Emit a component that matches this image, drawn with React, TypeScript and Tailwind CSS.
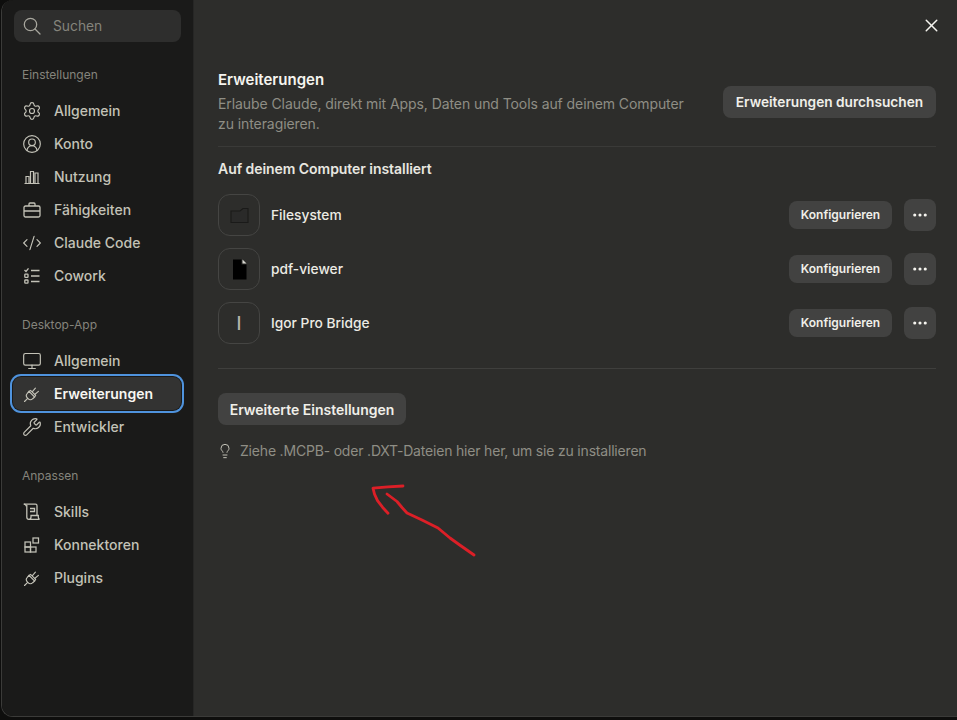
import { useState } from "react";
import {
  Settings,
  CircleUserRound,
  CodeXml,
  Monitor,
  Wrench,
  Lightbulb,
  X,
  Ellipsis,
} from "lucide-react";

const iconProps = { size: 20, strokeWidth: 1.4 };

function SearchIcon() {
  return (
    <svg width="18" height="18" viewBox="0 0 18 18" fill="none" stroke="currentColor" strokeWidth="1.25" strokeLinecap="round">
      <circle cx="7.5" cy="7.5" r="6.2" />
      <path d="M12 12l5 5" />
    </svg>
  );
}

function BarsIcon() {
  return (
    <svg width="18" height="18" viewBox="0 0 18 18" fill="none" stroke="currentColor" strokeWidth="1.2">
      <path d="M1.5 15.5h15" />
      <path d="M3 15V8.5h3V15M7.5 15V3.5h3V15M12 15V5h3v10" />
    </svg>
  );
}

function BriefcaseIcon() {
  return (
    <svg width="18" height="18" viewBox="0 0 18 18" fill="none" stroke="currentColor" strokeWidth="1.3">
      <rect x="1" y="5" width="16" height="11" rx="1.5" />
      <path d="M6 5V3c0-.6.4-1 1-1h4c.6 0 1 .4 1 1v2" />
      <path d="M1 10h16" />
    </svg>
  );
}

function TasksIcon() {
  return (
    <svg width="18" height="18" viewBox="0 0 18 18" fill="none" stroke="currentColor" strokeWidth="1.3">
      <path d="M1.5 3l1.5 1.5 2.5-3.2" />
      <path d="M8 3.5h8.5M8 9h8.5M8 14.5h8.5" />
      <rect x="1.8" y="7.2" width="3.2" height="3.2" rx="0.6" />
      <rect x="1.8" y="13" width="3.2" height="3.2" rx="0.6" />
    </svg>
  );
}

function PlugIcon() {
  return (
    <svg width="18" height="18" viewBox="0 0 18 18" fill="none" stroke="currentColor" strokeWidth="1.15" strokeLinecap="round">
      <path d="M1.5 16.5l3.2-3.2" />
      <path d="M4.7 13.3c-1.8-1.8-1.7-3.7-.4-5l1.7-1.9 5.6 5.6-1.9 1.7c-1.3 1.3-3.2 1.4-5 -.4z" />
      <path d="M6 6.4l1.6-1 5 5-1 1.6" />
      <path d="M9.4 6.6l3-3.4M12 9.2l3.4-2.8" />
    </svg>
  );
}

function SkillsIcon() {
  return (
    <svg width="18" height="18" viewBox="0 0 18 18" fill="none" stroke="currentColor" strokeWidth="1.3">
      <path d="M.8 1.2h11.7c.9 0 1.5.6 1.5 1.5v9.3" />
      <path d="M.8 1.2c1.4 0 2.4.8 2.6 2.2" />
      <path d="M3.8 2v12c0 1.2.8 2.3 2 2.3h10.7c-.8-.4-1.2-1.2-1.2-2.3V12.5H8v1.6c0 1.2-.8 2.2-2.2 2.2" />
      <path d="M7 5.5h4.5v3H7" />
    </svg>
  );
}

function BlocksIcon() {
  return (
    <svg width="18" height="18" viewBox="0 0 18 18" fill="none" stroke="currentColor" strokeWidth="1.25">
      <rect x="10" y="2" width="5.5" height="5" />
      <rect x="2" y="6" width="5.5" height="5" />
      <rect x="2" y="11" width="5.5" height="5" />
      <rect x="7.5" y="11" width="5.5" height="5" />
    </svg>
  );
}

function NavItem({ icon, label, active }: { icon: React.ReactNode; label: string; active?: boolean }) {
  return (
    <div
      className={
        active
          ? "-ml-px flex h-[33px] items-center rounded-lg bg-[#333332] px-[8px] text-[#f8f7f2] ring-2 ring-[#4f93dd] ring-offset-1 ring-offset-[#1a1a19]"
          : "flex h-[33px] items-center px-[7px] text-[#c3c2b7]"
      }
    >
      <span className="mr-[12px] flex w-[21px] shrink-0 items-center justify-center text-[#c3c2b7]">{icon}</span>
      <span className={active ? "text-[14px] font-semibold" : "text-[14px] font-medium"}>{label}</span>
    </div>
  );
}

function SectionLabel({ children, className }: { children: string; className: string }) {
  return <p className={"pl-2 text-[12px] leading-4 text-[#85847c] " + className}>{children}</p>;
}

const extensions = [
  { name: "Filesystem", kind: "folder" },
  { name: "pdf-viewer", kind: "file" },
  { name: "Igor Pro Bridge", kind: "letter" },
];

function ExtIcon({ kind }: { kind: string }) {
  if (kind === "folder") {
    return (
      <svg width="19" height="17" viewBox="0 0 19 17" fill="#2a2a29" stroke="#1a1a19" strokeWidth="1.1">
        <path d="M1 4h9l3-2.5h5V15.500H1z" />
      </svg>
    );
  }
  if (kind === "file") {
    return (
      <svg width="15" height="21" viewBox="0 0 15 21">
        <path d="M1 .5h8.5v5h5V20.5H1z" fill="#000" />
        <path d="M10.5 .5l4 4h-4z" fill="#d8d7d0" />
      </svg>
    );
  }
  return <span className="text-[18px] font-medium text-[#b5b4ab]">I</span>;
}

function Button({ children, className }: { children: string; className?: string }) {
  return (
    <button className={"rounded-lg bg-[#424241] font-semibold text-[#f0efe9] " + (className ?? "")}>{children}</button>
  );
}

export default function App() {
  const [query, setQuery] = useState("");

  return (
    <div
      className="relative h-[720px] w-[957px] overflow-hidden bg-[#0e0e0d] pb-[3px] pl-px text-[#f0efe9]"
      style={{ fontFamily: "Inter, 'Noto Sans', sans-serif" }}
    >
      <div className="flex h-full overflow-hidden rounded-l-[12px] border-b border-l border-[#3b3b39]">
        <aside className="w-[192px] shrink-0 border-r border-[#262625] bg-[#1a1a19] pl-[12px] pr-[12px] pt-[10px]">
          <div className="flex h-[32px] items-center rounded-lg bg-[#2e2e2d] pl-[9px]">
            <span className="mr-[12px] text-[#a8a79e]">
              <SearchIcon />
            </span>
            <input
              value={query}
              onChange={(e) => setQuery(e.target.value)}
              placeholder="Suchen"
              className="w-[100px] bg-transparent text-[13.8px] text-white outline-none placeholder-[#85847c]"
            />
          </div>

          <SectionLabel className="mb-[11px] mt-[25px]">Einstellungen</SectionLabel>
          <NavItem icon={<Settings {...iconProps} />} label="Allgemein" />
          <NavItem icon={<CircleUserRound {...iconProps} />} label="Konto" />
          <NavItem icon={<BarsIcon />} label="Nutzung" />
          <NavItem icon={<BriefcaseIcon />} label="Fähigkeiten" />
          <NavItem icon={<CodeXml {...iconProps} />} label="Claude Code" />
          <NavItem icon={<TasksIcon />} label="Cowork" />

          <SectionLabel className="mb-[11px] mt-[25px]">Desktop-App</SectionLabel>
          <NavItem icon={<Monitor {...iconProps} />} label="Allgemein" />
          <NavItem icon={<PlugIcon />} label="Erweiterungen" active />
          <NavItem icon={<Wrench {...iconProps} />} label="Entwickler" />

          <SectionLabel className="mb-[11px] mt-[25px]">Anpassen</SectionLabel>
          <NavItem icon={<SkillsIcon />} label="Skills" />
          <NavItem icon={<BlocksIcon />} label="Konnektoren" />
          <NavItem icon={<PlugIcon />} label="Plugins" />
        </aside>

        <main className="relative flex-1 bg-[#2d2d2b] pl-[24px] pr-[21px] pt-[70px]">
          <button className="absolute right-[15px] top-[15px] text-[#f5f4ef]">
            <X size={21} strokeWidth={1.7} />
          </button>

          <div className="flex items-start justify-between border-b border-[#3a3a38] pb-[12px]">
            <div>
              <h1 className="text-[15px] font-semibold leading-[20px] text-[#f5f4ef]">Erweiterungen</h1>
              <p className="mt-[4px] w-[480px] text-[14px] leading-[20px] tracking-[-0.08px] text-[#8f8e85]">
                Erlaube Claude, direkt mit Apps, Daten und Tools auf deinem Computer zu interagieren.
              </p>
            </div>
            <Button className="mt-[16px] h-[32px] w-[213px] text-[13.7px]">Erweiterungen durchsuchen</Button>
          </div>

          <h2 className="mt-[12px] text-[14px] font-semibold leading-[20px] tracking-[-0.05px] text-[#e8e7e0]">
            Auf deinem Computer installiert
          </h2>

          <div className="mt-[15px] flex flex-col gap-[12px]">
            {extensions.map((ext) => (
              <div key={ext.name} className="flex h-[42px] items-center">
                <div className="mr-[11px] flex h-[42px] w-[42px] items-center justify-center rounded-[12px] border border-[#454543] bg-[#2d2d2b]">
                  <ExtIcon kind={ext.kind} />
                </div>
                <span className="flex-1 text-[13.75px] font-medium text-[#ecebe4]">{ext.name}</span>
                <Button className="h-[28px] w-[103px] text-[12px]">Konfigurieren</Button>
                <button className="ml-[12px] flex h-[32px] w-[32px] items-center justify-center rounded-lg bg-[#424241] text-[#f5f4ef]">
                  <Ellipsis size={18} strokeWidth={2.2} />
                </button>
              </div>
            ))}
          </div>

          <div className="mt-[24px] border-t border-[#3f3f3d] pt-[24px]">
            <Button className="h-[32px] w-[188px] text-[14px]">Erweiterte Einstellungen</Button>
            <div className="mt-[16px] flex items-center text-[#8f8e85]">
              <Lightbulb size={16} strokeWidth={1.5} className="-ml-px mr-[7px] text-[#c3c2b7]" />
              <span className="text-[14px] leading-[20px] tracking-[-0.19px]">
                Ziehe .MCPB- oder .DXT-Dateien hier her, um sie zu installieren
              </span>
            </div>
          </div>
        </main>
      </div>

      {/* rote Anmerkung */}
      <svg
        className="pointer-events-none absolute left-0 top-0"
        width="957"
        height="720"
        fill="none"
        stroke="#dc1f27"
        strokeWidth="2.8"
        strokeLinecap="round"
        strokeLinejoin="round"
      >
        <path d="M403 486l-15 .8-15 1.4 1.5 6 3 6.5 5 6.5 5.5 6" />
        <path d="M387 494l10 7.5 5 6 5 5.5 15 7 16 8 12 10 9 6.5 15 10.5" />
      </svg>
    </div>
  );
}
